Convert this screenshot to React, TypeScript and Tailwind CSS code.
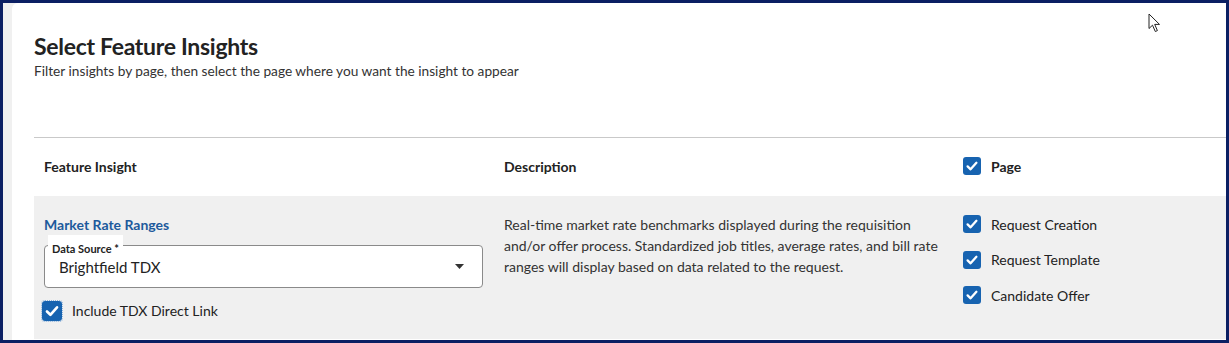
import React from 'react'

const pages = ['Request Creation', 'Request Template', 'Candidate Offer']

function CheckBox({ size = 18, focus = false }: { size?: number; focus?: boolean }) {
  return (
    <span
      className={`flex shrink-0 items-center justify-center rounded-[3px] bg-[#1763b0] ${
        focus ? 'w-5 h-5 rounded-[1px] outline-1 outline-dotted outline-[#8fb4dc]' : 'w-[18px] h-[18px]'
      }`}
    >
      <svg width={size - 4} height={size - 4} viewBox="0 0 14 14" fill="none">
        <path d="M2.6 7.4 L5.6 10.3 L11.4 3.8" stroke="white" strokeWidth="2.3" strokeLinecap="round" strokeLinejoin="round" />
      </svg>
    </span>
  )
}

function Cursor() {
  return (
    <svg className="absolute left-[1136px] top-[10px]" width="13" height="20" viewBox="0 0 13 20">
      <path d="M1 1 L1 15.5 L4.5 12.2 L7.3 18.5 L9.4 17.6 L6.7 11.4 L11.5 11.4 Z" fill="white" stroke="#222" strokeWidth="1" strokeLinejoin="round" />
    </svg>
  )
}

export default function App() {
  return (
    <div className="h-[343px] w-[1229px] bg-[#0b1f63] p-[3px] font-['Lato','Liberation_Sans',sans-serif] text-[#222]">
      <div className="flex h-full bg-[#f0f0f0] pl-[9px]">
        <div className="relative flex flex-1 flex-col rounded-tl-[6px] bg-white pl-[22px] pt-[28px]">
          <Cursor />

          {/* Heading */}
          <h1 className="text-[23px] font-bold leading-[30px] tracking-[-0.3px] text-[#222]">Select Feature Insights</h1>
          <p className="mt-[1px] text-[13.7px] leading-[18px] text-[#333]">
            Filter insights by page, then select the page where you want the insight to appear
          </p>

          {/* Table */}
          <div className="mt-[57px] flex flex-1 flex-col border-t border-[#c9c9c9]">
            <div className="grid h-[58px] grid-cols-[460px_459px_1fr] items-center pb-[2px] text-[14px] font-bold">
              <div className="pl-[10px]">Feature Insight</div>
              <div className="pl-[10px]">Description</div>
              <div className="flex items-center gap-[10px] pl-[10px]">
                <CheckBox />
                <span>Page</span>
              </div>
            </div>

            <div className="grid flex-1 grid-cols-[460px_459px_1fr] bg-[#f0f0f0] pt-[19px] text-[14px]">
              <div className="flex flex-col pl-[10px]">
                <a className="font-bold leading-5 text-[#1d5a9c]">Market Rate Ranges</a>
                <div className="relative mt-[10px] flex h-[43px] w-[439px] items-center justify-between rounded-[4px] border border-[#8a8a8a] bg-white pl-[14px] pr-[18px]">
                  <span className="absolute left-[3px] top-[-11px] bg-white px-[4px] pt-[8px] text-[11px] font-bold leading-[12px] text-[#222]">
                    Data Source *
                  </span>
                  <span className="text-[15px] leading-5 text-[#222]">Brightfield TDX</span>
                  <svg width="9" height="5" viewBox="0 0 9 5">
                    <path d="M0 0 L9 0 L4.5 5 Z" fill="#333" />
                  </svg>
                </div>
                <label className="mt-[13px] -ml-[2px] flex items-center gap-[10px] leading-5">
                  <CheckBox size={20} focus />
                  <span className="text-[#222]">Include TDX Direct Link</span>
                </label>
              </div>

              <p className="pl-[10px] pr-[12px] leading-[21px] text-[#333] -mt-[1px]">
                Real-time market rate benchmarks displayed during the requisition and/or offer process. Standardized job
                titles, average rates, and bill rate ranges will display based on data related to the request.
              </p>

              <div className="-mt-[1px] flex flex-col gap-[15.5px] pl-[10px]">
                {pages.map((p) => (
                  <label key={p} className="flex h-5 items-center gap-[10px] text-[#222]">
                    <CheckBox />
                    <span>{p}</span>
                  </label>
                ))}
              </div>
            </div>
            <div className="h-px bg-white" />
          </div>
        </div>
      </div>
    </div>
  )
}
